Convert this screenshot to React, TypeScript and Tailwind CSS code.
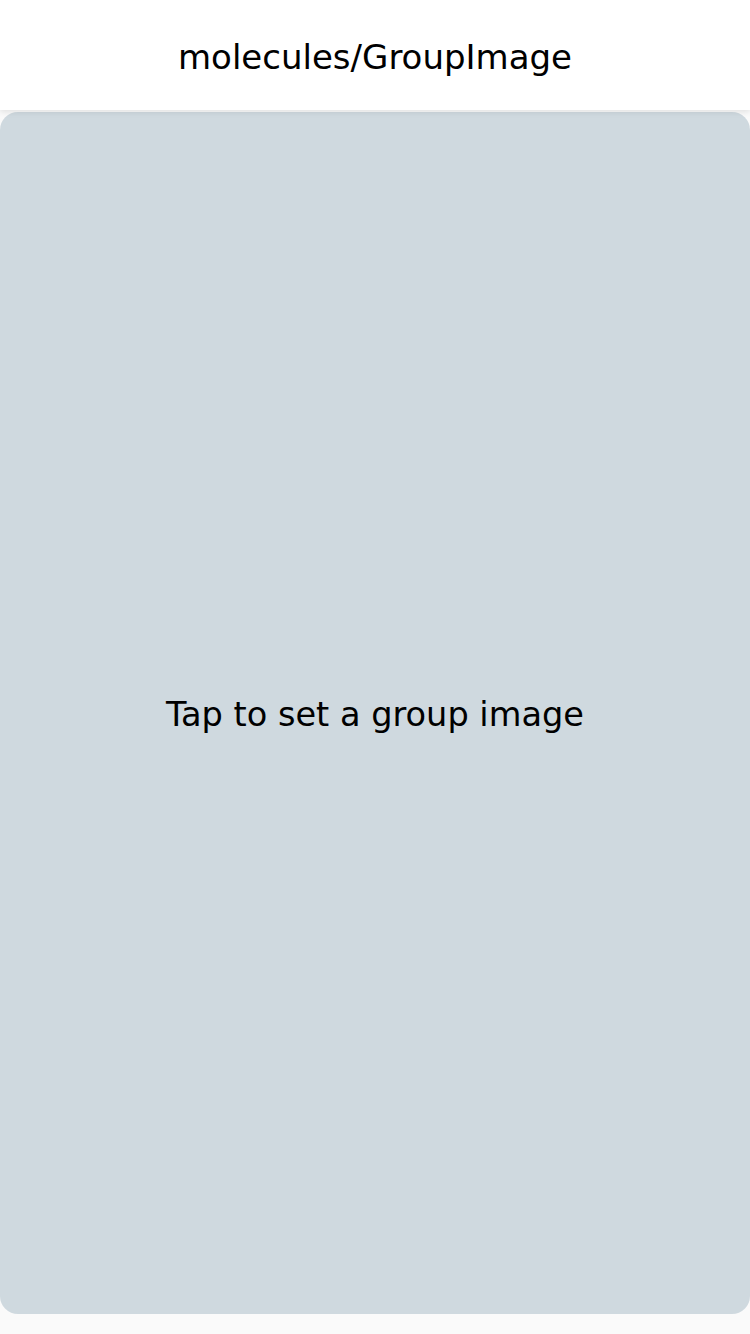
import React from "react";

export default function App() {
  return (
    <div className="w-[750px] h-[1334px] bg-[#fafafa] flex flex-col overflow-hidden" style={{ fontFamily: '"DejaVu Sans", sans-serif' }}>
      <header className="relative z-10 h-[110px] shrink-0 bg-white flex items-center justify-center shadow-[0_2px_6px_rgba(0,0,0,0.1)]">
        <h1 className="text-[34px] leading-none text-black pt-[4px]">molecules/GroupImage</h1>
      </header>
      <div className="mt-[2px] h-[1202px] shrink-0 rounded-[18px] bg-[#cfd9df] flex items-center justify-center">
        <span className="text-[33.6px] leading-none text-black pt-[4px]">Tap to set a group image</span>
      </div>
    </div>
  );
}
